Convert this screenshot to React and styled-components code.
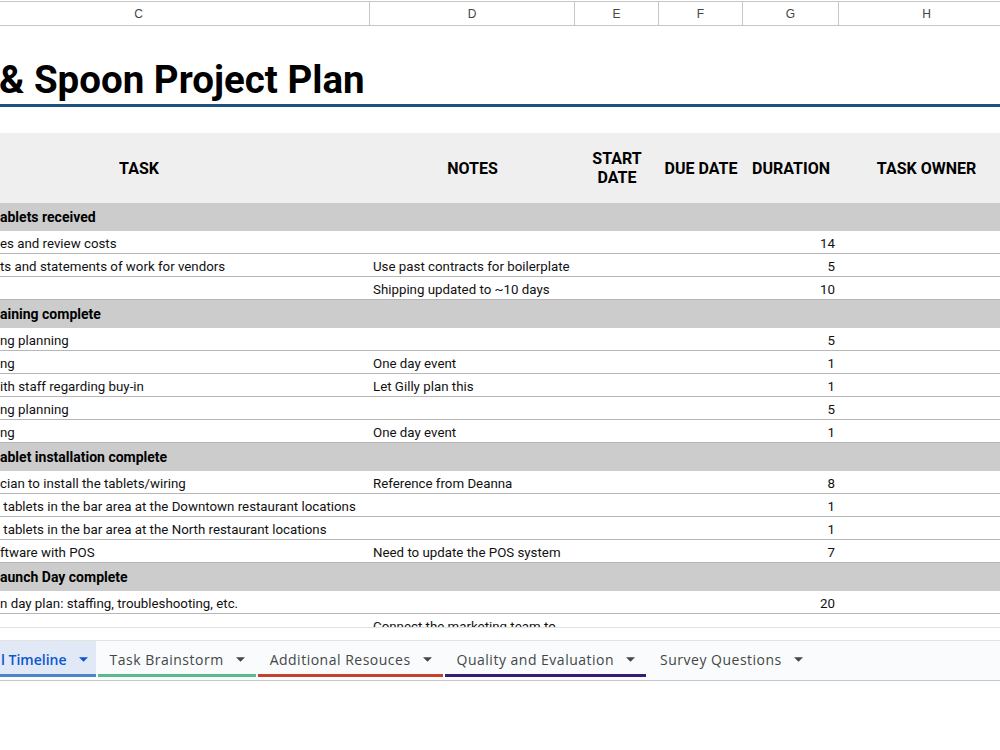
import React from "react";
import styled, { createGlobalStyle } from "styled-components";

const COLS = "370px 205px 84px 84px 96px 1fr";

const sections = [
  {
    title: "ablets received",
    rows: [
      { task: "es and review costs", notes: "", days: 14 },
      { task: "ts and statements of work for vendors", notes: "Use past contracts for boilerplate", days: 5 },
      { task: "", notes: "Shipping updated to ~10 days", days: 10 },
    ],
  },
  {
    title: "aining complete",
    rows: [
      { task: "ng planning", notes: "", days: 5 },
      { task: "ng", notes: "One day event", days: 1 },
      { task: "ith staff regarding buy-in", notes: "Let Gilly plan this", days: 1 },
      { task: "ng planning", notes: "", days: 5 },
      { task: "ng", notes: "One day event", days: 1 },
    ],
  },
  {
    title: "ablet installation complete",
    rows: [
      { task: "cian to install the tablets/wiring", notes: "Reference from Deanna", days: 8 },
      { task: "\u00a0tablets in the bar area at the Downtown restaurant locations", notes: "", days: 1 },
      { task: "\u00a0tablets in the bar area at the North restaurant locations", notes: "", days: 1 },
      { task: "ftware with POS", notes: "Need to update the POS system", days: 7 },
    ],
  },
  {
    title: "aunch Day complete",
    rows: [
      { task: "n day plan: staffing, troubleshooting, etc.", notes: "", days: 20 },
      { task: "", notes: "Connect the marketing team to", days: "", tall: true },
    ],
  },
];

const tabs = [
  { name: "l Timeline", color: "#4a86c8", active: true },
  { name: "Task Brainstorm", color: "#57bb8a" },
  { name: "Additional Resouces", color: "#c5412c" },
  { name: "Quality and Evaluation", color: "#351c75" },
  { name: "Survey Questions", color: "transparent" },
];

const App = () => {
  return (
    <>
      <GlobalStyle />
      <Page>
        {/* COLUMN LETTERS */}
        <ColumnBar>
          {["C", "D", "E", "F", "G", "H"].map((c) => (
            <ColumnLetter key={c}>{c}</ColumnLetter>
          ))}
        </ColumnBar>

        <Sheet>
          <TitleRow>
            <Title>&amp; Spoon Project Plan</Title>
          </TitleRow>
          <Spacer />

          <HeaderRow>
            <HeaderCell>TASK</HeaderCell>
            <HeaderCell>NOTES</HeaderCell>
            <HeaderCell>START<br />DATE</HeaderCell>
            <HeaderCell>DUE DATE</HeaderCell>
            <HeaderCell>DURATION</HeaderCell>
            <HeaderCell>TASK OWNER</HeaderCell>
          </HeaderRow>

          {sections.map((s) => (
            <React.Fragment key={s.title}>
              <SectionRow>{s.title}</SectionRow>
              {s.rows.map((r, i) => (
                <DataRow key={i} $tall={r.tall}>
                  <Cell>{r.task}</Cell>
                  <Cell>{r.notes}</Cell>
                  <Cell />
                  <Cell />
                  <Cell $right>{r.days}</Cell>
                  <Cell />
                </DataRow>
              ))}
            </React.Fragment>
          ))}
        </Sheet>

        <ScrollStrip />

        {/* SHEET TABS */}
        <TabBar>
          {tabs.map((t) => (
            <Tab key={t.name} $underline={t.color} $active={t.active}>
              <span>{t.name}</span>
              <Caret viewBox="0 0 10 5">
                <path d="M0 0 L10 0 L5 5 Z" />
              </Caret>
            </Tab>
          ))}
        </TabBar>
      </Page>
    </>
  );
};

const GlobalStyle = createGlobalStyle`
html, body {
    margin: 0;
    padding: 0;
    background: #fff;
    overflow: hidden;
}
body {
    font-family: Roboto, "Liberation Sans", sans-serif;
    color: #000;
}
`;

const Page = styled.div`
width: 1000px;
height: 750px;
display: flex;
flex-direction: column;
overflow: hidden;
background: #fff;
`;

const ColumnBar = styled.div`
display: grid;
grid-template-columns: ${COLS};
height: 23px;
margin-top: 1px;
border-top: 1px solid #c4c7c5;
border-bottom: 1px solid #c4c7c5;
flex-shrink: 0;
`;

/* first and last columns are partly scrolled out of view */
const ColumnLetter = styled.div`
display: flex;
align-items: center;
justify-content: center;
border-right: 1px solid #c4c7c5;
font-family: "Liberation Sans", Arial, sans-serif;
font-size: 12px;
color: #444746;
&:first-child {
    padding-right: 92px;
}
&:last-child {
    padding-left: 14px;
    border-right: none;
}
`;

const Sheet = styled.div`
height: 601px;
overflow: hidden;
flex-shrink: 0;
`;

const TitleRow = styled.div`
height: 78px;
display: flex;
align-items: flex-end;
border-bottom: 3px solid #1c4f82;
`;

const Title = styled.h1`
margin: 0 0 1px -1px;
font-size: 38.5px;
font-weight: 700;
line-height: 46px;
white-space: nowrap;
`;

const Spacer = styled.div`
height: 26px;
`;

const HeaderRow = styled.div`
display: grid;
grid-template-columns: ${COLS};
height: 70px;
background: #efefef;
`;

const HeaderCell = styled.div`
display: flex;
align-items: center;
justify-content: center;
text-align: center;
font-size: 16px;
font-weight: 700;
line-height: 19px;
&:first-child {
    padding-right: 92px;
}
&:last-child {
    padding-left: 14px;
}
`;

const SectionRow = styled.div`
height: 28px;
background: #cccccc;
display: flex;
align-items: center;
font-size: 14px;
font-weight: 700;
white-space: nowrap;
`;

const DataRow = styled.div`
display: grid;
grid-template-columns: ${COLS};
height: ${(p) => (p.$tall ? "37px" : "22px")};
padding-top: ${(p) => (p.$tall ? "3px" : "0")};
border-bottom: 1px solid #b7b7b7;
align-items: ${(p) => (p.$tall ? "start" : "center")};
`;

const Cell = styled.div`
font-size: 13.3px;
padding: ${(p) => (p.$right ? "2px 4px 0 0" : "2px 0 0 3px")};
text-align: ${(p) => (p.$right ? "right" : "left")};
white-space: nowrap;
overflow: hidden;
color: #111;
&:first-child {
    padding-left: 0;
}
`;

const ScrollStrip = styled.div`
height: 12px;
border-top: 1px solid #e1e3e1;
border-bottom: 1px solid #e1e3e1;
flex-shrink: 0;
`;

const TabBar = styled.div`
display: flex;
gap: 2px;
height: 36px;
padding-bottom: 3px;
background: #f9fbfd;
border-bottom: 1px solid #c4c7c5;
flex-shrink: 0;
`;

const Tab = styled.div`
display: flex;
align-items: center;
gap: 12px;
padding: 3px 11px 0 12px;
font-family: "Open Sans", Roboto, sans-serif;
font-size: 14px;
letter-spacing: ${(p) => (p.$active ? "0" : "0.5px")};
font-weight: ${(p) => (p.$active ? 600 : 400)};
color: ${(p) => (p.$active ? "#0b57d0" : "#444746")};
background: ${(p) => (p.$active ? "#e1e9f7" : "transparent")};
border-bottom: 3px solid ${(p) => p.$underline};
white-space: nowrap;
&:first-child {
    padding-left: 1px;
    padding-right: 8px;
}
svg {
    fill: ${(p) => (p.$active ? "#0b57d0" : "#444746")};
}
`;

const Caret = styled.svg`
width: 9px;
height: 5px;
`;

export default App;
